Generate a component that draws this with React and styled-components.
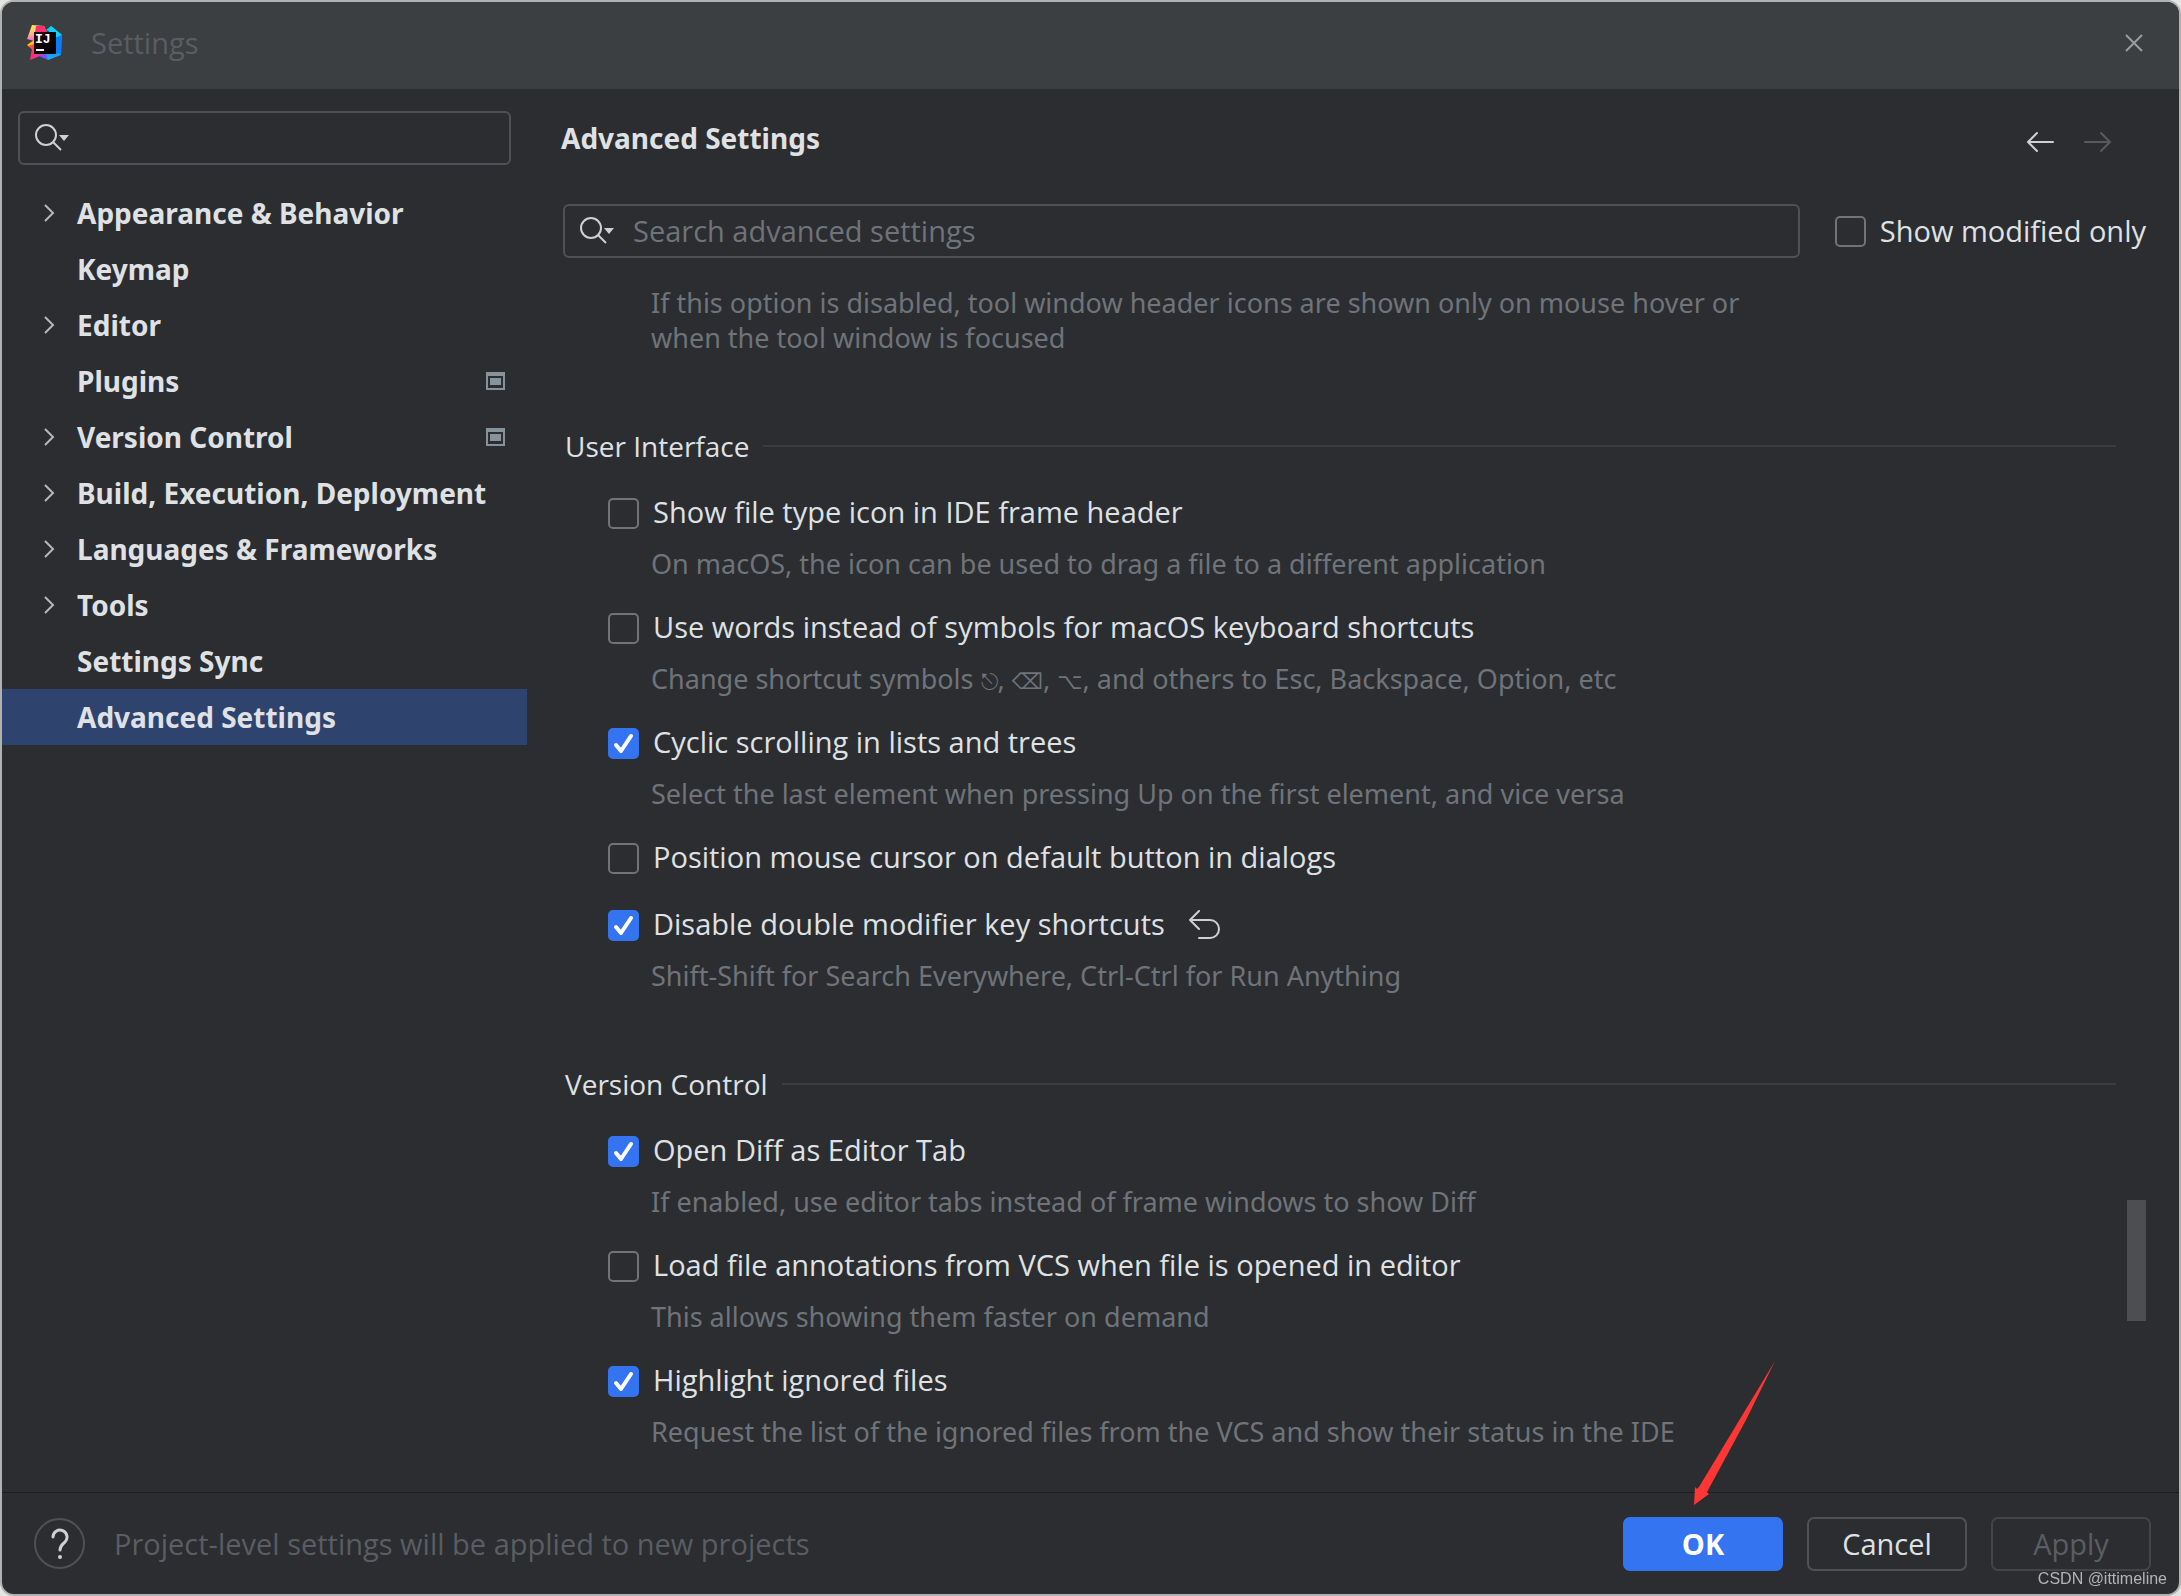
import React from 'react'
import styled, { createGlobalStyle } from 'styled-components'

const ShortcutHint = () => (
  <>Change shortcut symbols <Key>⎋</Key>, <Key>⌫</Key>, <Key>⌥</Key>, and others to Esc, Backspace, Option, etc</>
)

const categories = [
  { name: 'Appearance & Behavior', group: true },
  { name: 'Keymap' },
  { name: 'Editor', group: true },
  { name: 'Plugins', project: true },
  { name: 'Version Control', group: true, project: true },
  { name: 'Build, Execution, Deployment', group: true },
  { name: 'Languages & Frameworks', group: true },
  { name: 'Tools', group: true },
  { name: 'Settings Sync' },
  { name: 'Advanced Settings', selected: true },
]

const sections = [
  {
    title: 'User Interface',
    options: [
      { label: 'Show file type icon in IDE frame header', hint: 'On macOS, the icon can be used to drag a file to a different application' },
      { label: 'Use words instead of symbols for macOS keyboard shortcuts', hint: <ShortcutHint /> },
      { label: 'Cyclic scrolling in lists and trees', checked: true, hint: 'Select the last element when pressing Up on the first element, and vice versa' },
      { label: 'Position mouse cursor on default button in dialogs' },
      { label: 'Disable double modifier key shortcuts', checked: true, modified: true, hint: 'Shift-Shift for Search Everywhere, Ctrl-Ctrl for Run Anything' },
    ],
  },
  {
    title: 'Version Control',
    options: [
      { label: 'Open Diff as Editor Tab', checked: true, hint: 'If enabled, use editor tabs instead of frame windows to show Diff' },
      { label: 'Load file annotations from VCS when file is opened in editor', hint: 'This allows showing them faster on demand' },
      { label: 'Highlight ignored files', checked: true, hint: 'Request the list of the ignored files from the VCS and show their status in the IDE' },
    ],
  },
]

const Logo = () => (
  <svg width='36' height='36' viewBox='0 0 36 36' aria-hidden='true'>
    <defs>
      <linearGradient id='ink' x1='0' y1='0' x2='1' y2='1'>
        <stop offset='0' stopColor='#2a0c18' />
        <stop offset='0.5' stopColor='#0c0206' />
        <stop offset='1' stopColor='#000' />
      </linearGradient>
      <linearGradient id='cool' x1='0' y1='0' x2='0' y2='1'>
        <stop offset='0' stopColor='#07d8f5' />
        <stop offset='0.5' stopColor='#087cfa' />
        <stop offset='1' stopColor='#1fb0f8' />
      </linearGradient>
      <linearGradient id='flame' x1='0' y1='0' x2='1' y2='1'>
        <stop offset='0' stopColor='#fe5a2a' />
        <stop offset='0.5' stopColor='#fe2d7a' />
        <stop offset='1' stopColor='#d43bf0' />
      </linearGradient>
      <linearGradient id='sun' x1='0' y1='0' x2='0' y2='1'>
        <stop offset='0' stopColor='#fbe85a' />
        <stop offset='0.6' stopColor='#f9b38a' />
        <stop offset='1' stopColor='#f85fc8' />
      </linearGradient>
    </defs>
    <path d='M19 5L24 1L35 10L34 30L21 35L14 29L27 27L27 9Z' fill='url(#cool)' />
    <path d='M24 1L35 10L28 13L22 7Z' fill='#0fd3f7' />
    <path d='M28 13L35 10L34 29L28 28Z' fill='#087cfa' />
    <path d='M5 0L17 1L20 8L8 9L7 16L0 14Z' fill='url(#sun)' />
    <path d='M9 1L17 1L20 8L8 8Z' fill='#fe2d6b' />
    <path d='M0 20L7 15L8 22L5 24Z' fill='#fdc00d' />
    <path d='M1 21L8 19L10 29L18 29L3 35L5 24Z' fill='url(#flame)' />
    <path d='M12 31L19 28L21 35Z' fill='#6a5bf5' />
    <rect x='7' y='7' width='22' height='22' fill='url(#ink)' />
    <LogoText x='8' y='18'>IJ</LogoText>
    <path d='M9 25h8' stroke='#fff' strokeWidth='2' />
  </svg>
)

const SearchIcon = () => (
  <svg width='36' height='30' viewBox='0 0 36 30' fill='none' aria-hidden='true'>
    <circle cx='12' cy='12' r='10' stroke='#ced0d6' strokeWidth='2' />
    <path d='M19 19l8 8' stroke='#ced0d6' strokeWidth='2' />
    <path d='M25 12h10l-5 6z' fill='#ced0d6' />
  </svg>
)

const Chevron = () => (
  <svg width='14' height='20' viewBox='0 0 14 20' fill='none' aria-hidden='true'>
    <path d='M3 2l8 8-8 8' stroke='#b4b8bf' strokeWidth='2' />
  </svg>
)

const ProjectIcon = () => (
  <svg width='19' height='18' viewBox='0 0 19 18' role='img' aria-label='Project level'>
    <path fillRule='evenodd' fill='#87939a' d='M0 0h19v18H0zM2 4h15v12H2z' />
    <path fill='#87939a' d='M4 6h11v7H4z' />
  </svg>
)

const Arrow = ({ forward }) => (
  <svg width='28' height='22' viewBox='0 0 28 22' fill='none' stroke='currentColor' strokeWidth='2' strokeLinecap='round' aria-hidden='true'>
    {forward
      ? <path d='M1 11h25M17 2l9 9-9 9' />
      : <path d='M27 11H2M11 2l-9 9 9 9' />}
  </svg>
)

const Checkbox = ({ id, checked }) => (
  <CheckBox>
    <input type='checkbox' id={id} defaultChecked={checked} />
    <svg viewBox='0 0 31 31' fill='none' aria-hidden='true'>
      <path d='M8 17l5 6L23 8' stroke='#fff' strokeWidth='4' strokeLinecap='round' strokeLinejoin='round' />
    </svg>
  </CheckBox>
)

const Option = ({ id, label, hint, checked, modified }) => (
  <OptionBlock>
    <OptionRow>
      <Checkbox id={id} checked={checked} />
      <label htmlFor={id}>{label}</label>
      {modified && (
        <IconButton aria-label='Restore default'>
          <svg width='32' height='30' viewBox='0 0 32 30' fill='none' stroke='#ced0d6' strokeWidth='2' strokeLinecap='round' strokeLinejoin='round'>
            <path d='M10 1L1 10l9 9M1 10h20a9 9 0 0 1 0 18H10' />
          </svg>
        </IconButton>
      )}
    </OptionRow>
    {hint && <Hint>{hint}</Hint>}
  </OptionBlock>
)

const App = () => {
  return (
    <>
      <GlobalStyle />
      <Window>
        <TitleBar>
          <Logo />
          <span>Settings</span>
          <CloseButton aria-label='Close'>
            <svg width='18' height='18' viewBox='0 0 18 18' stroke='#9a9c9e' strokeWidth='2' aria-hidden='true'>
              <path d='M1 1l16 16M17 1L1 17' />
            </svg>
          </CloseButton>
        </TitleBar>

        <Body>
          <Sidebar>
            <SidebarSearch>
              <SearchIcon />
              <input type='text' aria-label='Search settings' />
            </SidebarSearch>
            <nav>
              {categories.map((item) => (
                <Category key={item.name} href='#' $selected={item.selected}>
                  <ChevronSlot>{item.group && <Chevron />}</ChevronSlot>
                  <CategoryName>{item.name}</CategoryName>
                  {item.project && <ProjectIcon />}
                </Category>
              ))}
            </nav>
          </Sidebar>

          <Main>
            <Heading>
              <h1>Advanced Settings</h1>
              <IconButton aria-label='Back'><Arrow /></IconButton>
              <IconButton aria-label='Forward' disabled><Arrow forward /></IconButton>
            </Heading>
            <FilterRow>
              <SearchBox>
                <SearchIcon />
                <input type='text' aria-label='Search advanced settings' placeholder='Search advanced settings' />
              </SearchBox>
              <ModifiedOnly>
                <Checkbox id='modified-only' />
                <label htmlFor='modified-only'>Show modified only</label>
              </ModifiedOnly>
            </FilterRow>
            <ScrollPane>
              <Options>
                <Hint>If this option is disabled, tool window header icons are shown only on mouse hover or when the tool window is focused</Hint>
                {sections.map((section) => (
                  <Section key={section.title}>
                    <SectionTitle>{section.title}</SectionTitle>
                    {section.options.map((option, i) => (
                      <Option key={option.label} id={`${section.title}-${i}`.replace(' ', '-')} {...option} />
                    ))}
                  </Section>
                ))}
              </Options>
              <ScrollTrack><ScrollThumb /></ScrollTrack>
            </ScrollPane>
          </Main>
        </Body>

        <Footer>
          <HelpButton aria-label='Help'>
            <svg width='18' height='32' viewBox='0 0 18 32' fill='none' aria-hidden='true'>
              <path d='M2 9a7 7 0 1 1 12 5c-3 3-5 4-5 8' stroke='#ced0d6' strokeWidth='3' strokeLinecap='round' />
              <circle cx='9' cy='29' r='2' fill='#ced0d6' />
            </svg>
          </HelpButton>
          <FooterNote>Project-level settings will be applied to new projects</FooterNote>
          <Button $primary>OK
            <Pointer width='84' height='146' viewBox='0 0 84 146' aria-hidden='true'>
              <path d='M82 1L53 60L14 132L16 134L1 145L2 127L4 129L6 127L47 59Z' fill='#ff3734' />
            </Pointer>
          </Button>
          <Button>Cancel</Button>
          <Button disabled>Apply</Button>
        </Footer>
      </Window>
      <Watermark>CSDN @ittimeline</Watermark>
    </>
  )
}

export default App

const GlobalStyle = createGlobalStyle`
  *{
    box-sizing: border-box;
  }

  body{
    margin: 0;
    background: #e4e4e4;
    color: #dfe1e5;
    font-family: "Open Sans", "Noto Sans", "DejaVu Sans", sans-serif;
    font-size: 29px;
    line-height: 40px;
  }

  button, input{
    font: inherit;
    color: inherit;
  }

  button{
    padding: 0;
    border: none;
    background: none;
  }
`;

const Window = styled.div`
  display: flex;
  flex-direction: column;
  min-height: 100vh;
  border: 2px solid #b0b2b1;
  border-radius: 14px;
  background: #2b2d30;
  overflow: hidden;
`;

const TitleBar = styled.header`
  display: flex;
  align-items: center;
  height: 87px;
  padding: 0 36px 5px 25px;
  gap: 28px;
  background: #3c3f41;
  color: #5a5d63;
`;

const LogoText = styled.text`
  fill: #fff;
  font-family: "Liberation Mono", monospace;
  font-size: 13px;
  font-weight: 700;
`;

const IconButton = styled.button`
  display: flex;
  color: #ced0d6;

  &:disabled{
    color: #5a5a5a;
  }
`;

const CloseButton = styled(IconButton)`
  margin-left: auto;
`;

const Body = styled.div`
  display: flex;
  flex: 1;
`;

const Sidebar = styled.aside`
  flex: none;
  width: 525px;
  padding-top: 22px;
`;

const SearchBox = styled.div`
  display: flex;
  flex: 1;
  align-items: center;
  height: 54px;
  padding: 0 14px;
  gap: 18px;
  border: 2px solid #4e5157;
  border-radius: 6px;

  input{
    flex: 1;
    min-width: 0;
    padding: 0;
    border: none;
    outline: none;
    background: none;
  }

  input::placeholder{
    color: #6f737a;
    opacity: 1;
  }
`;

const SidebarSearch = styled(SearchBox)`
  margin: 0 16px 20px;
`;

const Category = styled.a`
  display: flex;
  align-items: center;
  height: 56px;
  padding: 0 22px 0 40px;
  background: ${(props) => (props.$selected ? '#2e436e' : 'none')};
  color: #dfe1e5;
  font-family: "Noto Sans", sans-serif;
  font-size: 28px;
  font-weight: 700;
  text-decoration: none;
`;

const ChevronSlot = styled.span`
  display: flex;
  flex: none;
  width: 35px;
`;

const CategoryName = styled.span`
  flex: 1;
  white-space: nowrap;
`;

const Main = styled.main`
  display: flex;
  flex: 1;
  flex-direction: column;
  padding: 29px 33px 0 34px;
`;

const Heading = styled.div`
  display: flex;
  align-items: center;
  gap: 30px;
  padding-right: 34px;
  margin-bottom: 46px;

  h1{
    flex: 1;
    margin: 0;
    font-family: "Noto Sans", sans-serif;
    font-size: 28px;
    font-weight: 700;
    line-height: 40px;
  }

  button{
    padding-top: 8px;
  }
`;

const FilterRow = styled.div`
  display: flex;
  align-items: center;
  gap: 35px;
  padding-left: 2px;
`;

const CheckBox = styled.span`
  display: grid;
  flex: none;
  width: 31px;
  height: 31px;

  input, svg{
    grid-area: 1 / 1;
    width: 31px;
    height: 31px;
    margin: 0;
  }

  input{
    appearance: none;
    border: 2px solid #6f737a;
    border-radius: 5px;
  }

  input:checked{
    border-color: #3574f0;
    background: #3574f0;
  }

  svg{
    visibility: hidden;
    pointer-events: none;
  }

  input:checked + svg{
    visibility: visible;
  }
`;

const ModifiedOnly = styled.div`
  display: flex;
  align-items: center;
  gap: 14px;
  white-space: nowrap;
`;

const ScrollPane = styled.div`
  display: flex;
  flex: 1;
`;

const Options = styled.div`
  flex: 1;
  padding: 27px 11px 0 4px;
`;

const Hint = styled.p`
  max-width: 1200px;
  margin: 0;
  padding-left: 86px;
  color: #6f737a;
  font-family: "Noto Sans", sans-serif;
  font-size: 27px;
  line-height: 35px;
`;

const Key = styled.span`
  font-family: "DejaVu Sans", sans-serif;
  font-size: 22px;
  line-height: 1;
`;

const Section = styled.section`
  margin-top: 71px;
`;

const SectionTitle = styled.h2`
  display: flex;
  align-items: center;
  gap: 14px;
  margin: 0;
  font-size: 28px;
  font-weight: 400;
  line-height: 40px;

  &::after{
    content: '';
    flex: 1;
    height: 2px;
    background: #3a3c40;
  }
`;

const OptionBlock = styled.div`
  margin-top: 27px;
`;

const OptionRow = styled.div`
  display: flex;
  align-items: center;
  height: 40px;
  gap: 14px;
  padding-left: 43px;

  & + p{
    margin-top: 13px;
  }

  label{
    padding-bottom: 2px;
  }

  button{
    margin-left: 10px;
  }
`;

const ScrollTrack = styled.div`
  position: relative;
  width: 19px;
  margin-top: 16px;
`;

const ScrollThumb = styled.div`
  position: absolute;
  top: 76%;
  width: 100%;
  height: 10%;
  background: #4d4e51;
`;

const Footer = styled.footer`
  display: flex;
  align-items: center;
  height: 102px;
  padding: 0 28px 0 32px;
  gap: 24px;
  border-top: 1px solid #1e1f22;
`;

const HelpButton = styled.button`
  display: flex;
  align-items: center;
  justify-content: center;
  width: 51px;
  height: 51px;
  border: 2px solid #4e5157;
  border-radius: 50%;
`;

const FooterNote = styled.span`
  flex: 1;
  padding-left: 5px;
  color: #5a5d63;
`;

const Button = styled.button`
  position: relative;
  width: 160px;
  height: 54px;
  border: 2px solid ${(props) => (props.$primary ? '#3574f0' : '#4e5157')};
  border-radius: 7px;
  background: ${(props) => (props.$primary ? '#3574f0' : 'none')};
  color: ${(props) => (props.$primary ? '#fff' : '#dfe1e5')};
  font-weight: ${(props) => (props.$primary ? 700 : 400)};

  &:disabled{
    border-color: #43454a;
    color: #5a5d63;
  }
`;

const Pointer = styled.svg`
  position: absolute;
  right: 4px;
  bottom: 63px;
`;

const Watermark = styled.div`
  position: fixed;
  right: 14px;
  bottom: 8px;
  color: #b4b4b5;
  font-family: "Liberation Sans", Arial, sans-serif;
  font-size: 16px;
  line-height: 18px;
`;
